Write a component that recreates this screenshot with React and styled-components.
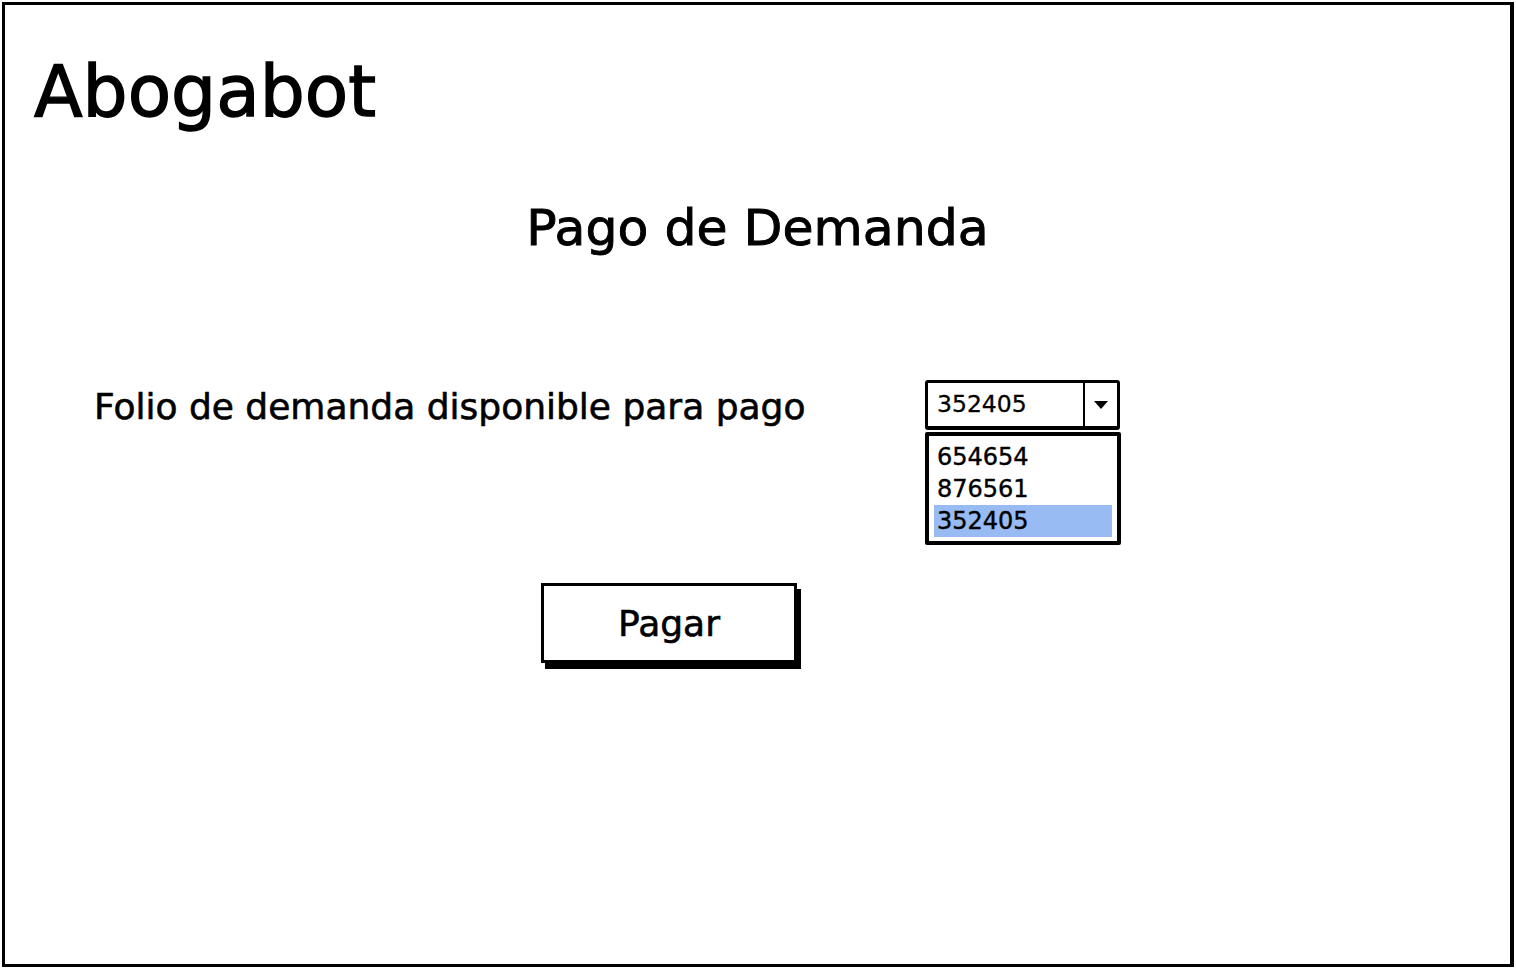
import React from 'react';
import styled, { createGlobalStyle } from 'styled-components';

const GlobalStyle = createGlobalStyle`
  html, body {
    margin: 0;
    padding: 0;
    background: #ffffff;
  }
  body {
    font-family: "DejaVu Sans", "Liberation Sans", sans-serif;
    color: #000000;
  }
`;

const Frame = styled.div`
  box-sizing: border-box;
  width: 1512px;
  height: 965px;
  margin: 2px;
  border: 3px solid #000;
  border-right-width: 4px;
  background: #fff;
  display: flex;
  flex-direction: column;
`;

const Brand = styled.h1`
  margin: 47px 0 0 29px;
  font-size: 71px;
  line-height: 80px;
  font-weight: normal;
  -webkit-text-stroke: 1.4px #000;
`;

const PageTitle = styled.h2`
  margin: 66px 0 0 0;
  text-align: center;
  font-size: 50.5px;
  line-height: 60px;
  font-weight: normal;
  -webkit-text-stroke: 0.9px #000;
`;

const FormRow = styled.div`
  display: grid;
  grid-template-columns: 831px auto;
  align-items: start;
  margin: 122px 0 0 89px;
`;

const Label = styled.label`
  margin-top: 2px;
  font-size: 36px;
  line-height: 50px;
  -webkit-text-stroke: 0.6px #000;
`;

const SelectWrap = styled.div`
  display: flex;
  flex-direction: column;
  gap: 2px;
  width: 196px;
`;

const SelectBox = styled.div`
  box-sizing: border-box;
  height: 50px;
  width: 195px;
  border: 3px solid #000;
  border-bottom-width: 4px;
  border-radius: 3px;
  display: flex;
  align-items: stretch;
`;

const SelectValue = styled.span`
  flex: 1;
  padding-left: 9px;
  font-size: 23.5px;
  line-height: 42px;
  -webkit-text-stroke: 0.3px #000;
`;

const ArrowCell = styled.span`
  width: 32px;
  border-left: 2px solid #000;
  display: flex;
  align-items: center;
  justify-content: center;
`;

const ListBox = styled.ul`
  box-sizing: border-box;
  margin: 0;
  list-style: none;
  width: 196px;
  height: 113px;
  padding: 5px 5px 4px 5px;
  border: 4px solid #000;
  border-radius: 2px;
`;

const ListItem = styled.li`
  height: 32px;
  padding-left: 3px;
  font-size: 24px;
  line-height: 32px;
  -webkit-text-stroke: 0.4px #000;
  background: ${(p) => (p.selected ? '#97bbf2' : 'transparent')};
`;

const ButtonRow = styled.div`
  margin: 38px 0 0 536px;
`;

const PayButton = styled.button`
  box-sizing: border-box;
  width: 256px;
  height: 80px;
  border: 3px solid #000;
  background: #fff;
  box-shadow: 4px 6px 0 #000;
  font-family: "DejaVu Sans", "Liberation Sans", sans-serif;
  font-size: 36px;
  -webkit-text-stroke: 0.6px #000;
  color: #000;
  padding: 0;
  cursor: pointer;
`;

const folios = ['654654', '876561', '352405'];

export default function App() {
  const selected = '352405';
  return (
    <>
      <GlobalStyle />
      <Frame>
        <Brand>Abogabot</Brand>
        <PageTitle>Pago de Demanda</PageTitle>
        <FormRow>
          <Label>Folio de demanda disponible para pago</Label>
          <SelectWrap>
            <SelectBox>
              <SelectValue>{selected}</SelectValue>
              <ArrowCell>
                <svg width="14" height="8" viewBox="0 0 14 8">
                  <path d="M0 0 L14 0 L7 8 Z" fill="#000" />
                </svg>
              </ArrowCell>
            </SelectBox>
            <ListBox>
              {folios.map((f) => (
                <ListItem key={f} selected={f === selected}>
                  {f}
                </ListItem>
              ))}
            </ListBox>
          </SelectWrap>
        </FormRow>
        <ButtonRow>
          <PayButton>Pagar</PayButton>
        </ButtonRow>
      </Frame>
    </>
  );
}
